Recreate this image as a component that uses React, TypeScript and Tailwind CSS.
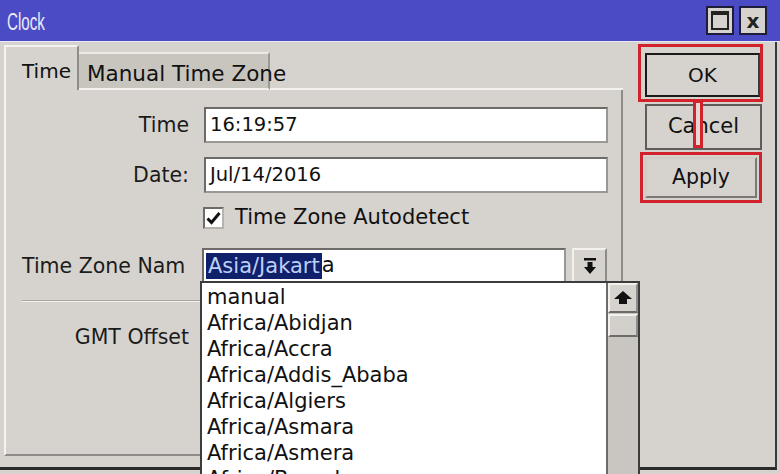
import React from 'react';

const font = { fontFamily: '"DejaVu Sans", "Noto Sans", sans-serif' };
const titleFont = { fontFamily: '"Liberation Sans", sans-serif' };

const zones = [
  'manual',
  'Africa/Abidjan',
  'Africa/Accra',
  'Africa/Addis_Ababa',
  'Africa/Algiers',
  'Africa/Asmara',
  'Africa/Asmera',
  'Africa/Bamako',
];

function Field({ label, value }: { label: string; value: string }) {
  return (
    <div className="flex items-center h-[36px]">
      <div className="w-[185px] pr-[2px] text-right text-[20.5px] text-[#1b1b1b]">{label}</div>
      <div className="ml-[13px] w-[404px] h-[36px] bg-white border-2 border-[#6d6b68] border-r-[#9a9894] border-b-[#9a9894] flex items-center pl-[4px] text-[19.5px] text-[#111]">
        {value}
      </div>
    </div>
  );
}

function DownBarIcon() {
  return (
    <svg width="14" height="17" viewBox="0 0 14 17">
      <rect x="1" y="0" width="12" height="2.5" fill="#111" />
      <path d="M4.5 4 H9.5 V9 H13 L7 16 L1 9 H4.5 Z" fill="#111" />
    </svg>
  );
}

function UpIcon() {
  return (
    <svg width="18" height="14" viewBox="0 0 18 14">
      <path d="M9 0 L18 8 H13 V13 H5 V8 H0 Z" fill="#111" />
    </svg>
  );
}

export default function App() {
  return (
    <div className="relative w-[780px] h-[474px] overflow-hidden bg-[#d6d3ce]" style={font}>
      {/* title bar */}
      <div className="h-[42px] bg-[#4b4bc6] flex items-center justify-between pl-[7px] pr-[13px] border-b border-[#e9e7f3]">
        <span className="inline-block origin-left scale-x-[0.66] text-[23px] text-[#ececf6] mt-[4px]" style={titleFont}>Clock</span>
        <div className="flex gap-[5px]">
          <div className="w-[28px] h-[29px] bg-[#d6d3ce] border-2 border-[#1e1e3a] flex items-center justify-center">
            <div className="w-[18px] h-[19px] border-2 border-[#222] border-t-[4px]" />
          </div>
          <div className="w-[28px] h-[29px] bg-[#d6d3ce] border-2 border-[#1e1e3a] flex items-center justify-center text-[20px] font-bold text-[#222] leading-none">
            x
          </div>
        </div>
      </div>

      <div className="flex h-[428px] border-r-2 border-[#3a3a3a] border-b-[3px] border-b-[#2a2a2a] mr-[3px]">
        {/* left panel */}
        <div className="ml-[4px] mt-[3px] w-[619px] flex flex-col">
          <div className="flex h-[45px] items-end">
            <div className="w-[75px] h-[45px] border-t-2 border-l-2 border-[#f4f3f0] border-r-2 border-r-[#8e8c88] pl-[16px] pt-[9px] text-[20px] text-[#111] bg-[#d6d3ce]">
              Time
            </div>
            <div className="relative w-[191px] h-[38px] bg-[#c8c5bf] border-t-2 border-[#ebe9e5] border-r-2 border-r-[#9b9994] border-b-2 border-b-[#f2f1ee]">
              <span className="absolute left-[8px] top-[4px] whitespace-nowrap text-[21.5px] text-[#111]">Manual Time Zone</span>
            </div>
            <div className="flex-1 h-[2px] bg-[#f2f1ee]" />
          </div>

          <div className="flex-1 mb-[11px] border-l-2 border-[#f4f3f0] border-r-2 border-r-[#8e8c88] border-b-2 border-b-[#8e8c88] pt-[17px] flex flex-col">
            <div className="flex flex-col gap-[14px]">
              <Field label="Time" value="16:19:57" />
              <Field label="Date:" value="Jul/14/2016" />
            </div>

            <div className="flex items-center h-[22px] mt-[14px] ml-[197px]">
              <div className="w-[21px] h-[22px] bg-white border-2 border-[#6d6b68] border-r-[#b5b3ae] border-b-[#b5b3ae] flex items-center justify-center">
                <svg width="15" height="14" viewBox="0 0 15 14">
                  <path d="M1.5 7.5 L5.5 11.5 L13.5 2" fill="none" stroke="#111" strokeWidth="3" />
                </svg>
              </div>
              <span className="ml-[11px] text-[21px] text-[#111]">Time Zone Autodetect</span>
            </div>

            <div className="flex items-center h-[36px] mt-[19px]">
              <div className="w-[183px] pl-[16px] text-[20.5px] text-[#1b1b1b] whitespace-nowrap">Time Zone Nam</div>
              <div className="ml-[13px] w-[364px] h-[36px] bg-white border-2 border-[#6d6b68] border-r-[#9a9894] border-b-[#9a9894] flex items-center pl-[2px] text-[21px]">
                <span className="bg-[#10206b] text-[#bcd0f5] px-[2px] leading-[26px]">Asia/Jakart</span>
                <span className="text-[#111]">a</span>
              </div>
              <div className="ml-[6px] w-[35px] h-[36px] border-2 border-[#f2f1ee] border-r-[#8e8c88] border-b-[#8e8c88] flex items-center justify-center">
                <DownBarIcon />
              </div>
            </div>

            <div className="mt-[16px] ml-[16px] w-[178px] h-[2px] border-t border-[#a8a6a1] border-b border-b-[#f2f1ee]" />

            <div className="flex items-center h-[36px] mt-[17px]">
              <div className="w-[185px] pr-[2px] text-right text-[20.5px] text-[#1b1b1b]">GMT Offset</div>
            </div>
          </div>
        </div>

        {/* buttons */}
        <div className="ml-[15px] mt-[2px] w-[125px] flex flex-col">
          <div className="w-[125px] h-[58px] border-[3px] border-[#d2222c] pl-[4px] pr-0 pt-[6px] pb-[2px]">
            <div className="h-full border-2 border-[#1a1a1a] border-r-[#3a3a3a] flex items-center justify-center text-[20px] text-[#111]">OK</div>
          </div>
          <div className="relative mt-[2px] ml-[7px] w-[117px] h-[46px] border-2 border-[#5e5c58] flex items-center justify-center text-[21px] text-[#111]">
            Cancel
            <div className="absolute left-[46px] -top-[6px] w-[10px] h-[48px] border-[3px] border-[#d2222c] bg-[#e6d6d4]" />
          </div>
          <div className="mt-[2px] ml-[2px] w-[122px] h-[51px] border-[3px] border-[#d2222c] p-[2px]">
            <div className="h-full border-2 border-[#cfccc6] border-r-[#7a7874] border-b-[#7a7874] flex items-center justify-center text-[20.5px] text-[#111]">Apply</div>
          </div>
        </div>
      </div>

      {/* open dropdown list */}
      <div className="absolute left-[200px] top-[281px] w-[440px] h-[200px] bg-white border-2 border-[#3c3c3c] flex">
        <div className="flex-1 pt-[1px] pl-[5px]">
          {zones.map((z) => (
            <div key={z} className="h-[26px] leading-[26px] text-[21px] text-[#111] whitespace-nowrap">{z}</div>
          ))}
        </div>
        <div className="w-[32px] bg-[#c9c6c1] border-l-2 border-[#6d6b68] flex flex-col">
          <div className="h-[30px] bg-[#d6d3ce] border-2 border-[#f2f1ee] border-r-[#8e8c88] border-b-[#6d6b68] flex items-center justify-center">
            <UpIcon />
          </div>
          <div className="mt-[1px] h-[23px] bg-[#d3d0cb] border-2 border-[#f2f1ee] border-r-[#8e8c88] border-b-[#6d6b68]" />
        </div>
      </div>
    </div>
  );
}
